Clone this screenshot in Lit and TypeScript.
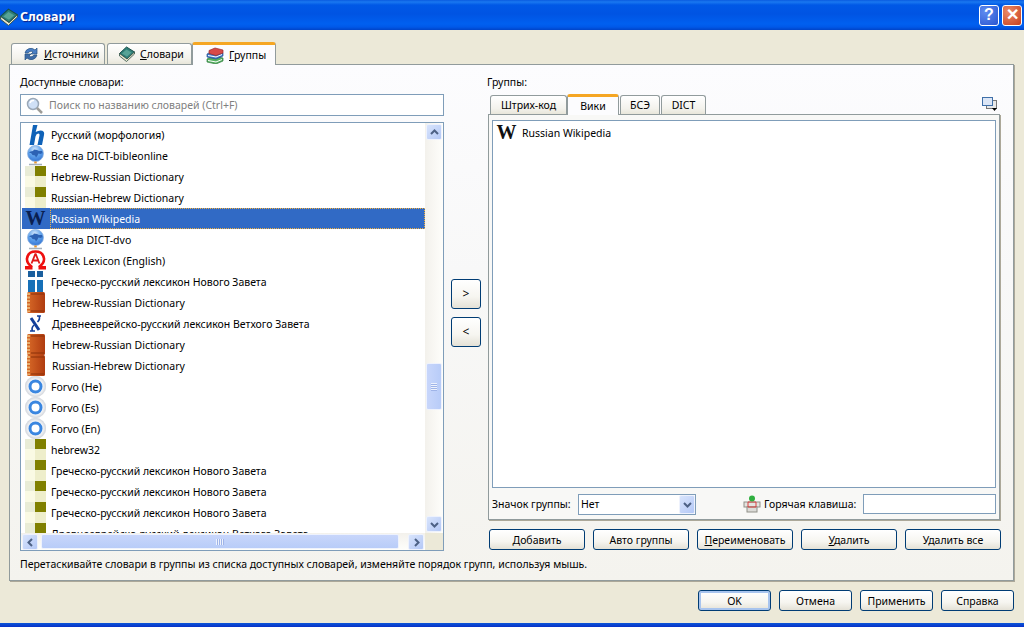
import { LitElement, html, css } from 'lit';
import { customElement } from 'lit/decorators.js';

const book = (size = 16) => html`<svg class="ic" width="${size}" height="${size}" viewBox="0 0 16 16">
  <path d="M.5 7.500 7.500 1 15.500 6 8 13Z" fill="#2f7f78" stroke="#174f4a"/>
  <path d="M3 7.500 7.500 3.500 12.500 6.500 8 10.500Z" fill="#57a396"/>
  <path d="M.5 7.500v2.500l7 5.500 8-7.500V6L8 13Z" fill="#e9e5cc" stroke="#2f4f46" stroke-width=".8"/>
</svg>`;

const refresh = html`<svg class="ic" width="16" height="16" viewBox="0 0 16 16">
  <path d="M2 7a6 6 0 0 1 10-3l2-2v6H8l2-2a3.500 3.500 0 0 0-5 1Z" fill="#4a7fc4" stroke="#25507f" stroke-width=".7"/>
  <path d="M14 9a6 6 0 0 1-10 3l-2 2V8h6L6 10a3.500 3.500 0 0 0 5-1Z" fill="#3e6ca8" stroke="#25507f" stroke-width=".7"/>
</svg>`;

const books = html`<svg class="ic" width="18" height="17" viewBox="0 0 18 17">
  <path d="M1 12 7 9l10 2v3l-7 3-9-2Z" fill="#55b060" stroke="#2e7a3c" stroke-width=".7"/>
  <path d="M2 13.500 10 15l6-2.500" fill="none" stroke="#fff"/>
  <path d="M1 7 7 4l10 2v3l-7 3-9-2Z" fill="#3f78c8" stroke="#24508f" stroke-width=".7"/>
  <path d="M2 8.500 10 10l6-2.500" fill="none" stroke="#fff"/>
  <path d="M3 3.500 9 1l8 2v3l-7 2.500-7-2Z" fill="#d84a48" stroke="#982a2a" stroke-width=".7"/>
</svg>`;

const magnifier = html`<svg class="ic" width="17" height="17" viewBox="0 0 17 17">
  <circle cx="7" cy="7" r="5.500" fill="#cfe0f6" stroke="#9aa8b8" stroke-width="1.500"/>
  <path d="M4 6a3.500 3.500 0 0 1 4-2.500" fill="none" stroke="#fff" stroke-width="1.500"/>
  <path d="m11 11 5 5" stroke="#9c9c98" stroke-width="2.500"/>
</svg>`;

const icons: Record<string, unknown> = {
  h: html`<span class="ic-box"><svg width="21" height="21" viewBox="0 0 21 21">
    <path d="M8 1h4.500l-1.800 7Q13 6.500 15.500 6.500 20 6.500 19 11l-2 10h-4.500l2-9.500q.4-2-1.200-2-2 0-2.800 3L9 21H4.500Z" fill="#0f62b8"/>
  </svg></span>`,
  globe: html`<span class="ic-box"><svg width="21" height="21" viewBox="0 0 21 21">
    <defs><radialGradient id="g" cx=".45" cy=".25" r=".8"><stop offset="0" stop-color="#d4e8fc"/><stop offset=".5" stop-color="#5fa2ec"/><stop offset="1" stop-color="#2f6fd0"/></radialGradient></defs>
    <circle cx="10.500" cy="8.500" r="8" fill="url(#g)" stroke="#8fb4e0" stroke-width=".8"/>
    <path d="M4 8q1-2 4-2l1-1.500 3 .5 2 1 3 0 .5 2-2 1-2-.5-1 2-1.500 2-1-2-2.500-.5-1.500-2Z" fill="#2c62b4"/>
    <path d="M10.500 16.500v2" stroke="#e8962c" stroke-width="2.500"/>
    <path d="M4 19.500h13" stroke="#a4b0bc" stroke-width="1.500"/>
  </svg></span>`,
  tile: html`<span class="ic-box"><svg width="21" height="21" viewBox="0 0 21 21" shape-rendering="crispEdges">
    <rect width="10" height="10" fill="#e9ecd6"/>
    <rect x="10" width="11" height="10" fill="#808000"/>
    <rect y="10" width="10" height="11" fill="#fafae4"/>
    <rect x="10" y="10" width="11" height="11" fill="#eeeecb"/>
  </svg></span>`,
  w: html`<span class="ic-box"><span class="ic-w">W</span></span>`,
  omega: html`<span class="ic-box"><svg width="21" height="21" viewBox="0 0 21 21">
    <path d="M7 17Q1.500 13 2 8.500 3 1.500 10.500 1.500T19 8.500Q19.500 13 14 17" fill="#fff" stroke="#ee1010" stroke-width="2.600"/>
    <path d="M0 16h7.500v3.500H0ZM13.500 16H21v3.500h-7.500Z" fill="#ee1010"/>
    <path d="m10.500 3.500-4 10M10.500 3.500l4 10M7.500 10.500h6" fill="none" stroke="#e01818" stroke-width="1.800"/>
  </svg></span>`,
  cross: html`<span class="ic-box"><svg width="21" height="21" viewBox="0 0 21 21" shape-rendering="crispEdges">
    <rect x="3" y="0" width="7" height="6" fill="#1a5f9e"/>
    <rect x="12" y="0" width="6" height="6" fill="#1a5f9e"/>
    <rect x="3" y="9" width="7" height="12" fill="#1670b8"/>
    <rect x="12" y="9" width="6" height="12" fill="#1670b8"/>
  </svg></span>`,
  redbook: html`<span class="ic-box"><svg width="21" height="21" viewBox="0 0 21 21">
    <defs><linearGradient id="rb" x1="0" x2="1" y1="0" y2="0"><stop offset="0" stop-color="#d86a28"/><stop offset="1" stop-color="#b03c10"/></linearGradient></defs>
    <rect x="2" y="0" width="18" height="21" rx="1.500" fill="url(#rb)"/>
    <path d="M3.500 1v19" stroke="#e8b070" stroke-width="3" stroke-dasharray="2 1.500"/>
    <path d="M6 2h13M6 19h13" stroke="#8a3008" stroke-width="1"/>
  </svg></span>`,
  aleph: html`<span class="ic-box"><svg width="21" height="21" viewBox="0 0 21 21">
    <path d="M6 5 14 17" stroke="#123f9a" stroke-width="3" fill="none"/>
    <path d="M14 3q1.500 3-1.500 6M7.500 18q-1.500-3 1.500-6M5 18h5M12 3h4" stroke="#123f9a" stroke-width="1.600" fill="none"/>
  </svg></span>`,
  ring: html`<span class="ic-box"><svg width="21" height="21" viewBox="0 0 21 21">
    <defs><radialGradient id="rg"><stop offset=".6" stop-color="#ffffff"/><stop offset="1" stop-color="#d4d8de"/></radialGradient></defs>
    <circle cx="10.500" cy="10.500" r="10.300" fill="url(#rg)" stroke="#d0d4da" stroke-width=".6"/>
    <circle cx="10.500" cy="10.500" r="5.500" fill="#fff" stroke="#3a86e0" stroke-width="3"/>
  </svg></span>`,
};

const items = [
  ['h', 'Русский (морфология)'],
  ['globe', 'Все на DICT-bibleonline'],
  ['tile', 'Hebrew-Russian Dictionary'],
  ['tile', 'Russian-Hebrew Dictionary'],
  ['w', 'Russian Wikipedia'],
  ['globe', 'Все на DICT-dvo'],
  ['omega', 'Greek Lexicon (English)'],
  ['cross', 'Греческо-русский лексикон Нового Завета'],
  ['redbook', 'Hebrew-Russian Dictionary'],
  ['aleph', 'Древнееврейско-русский лексикон Ветхого Завета'],
  ['redbook', 'Hebrew-Russian Dictionary'],
  ['redbook', 'Russian-Hebrew Dictionary'],
  ['ring', 'Forvo (He)'],
  ['ring', 'Forvo (Es)'],
  ['ring', 'Forvo (En)'],
  ['tile', 'hebrew32'],
  ['tile', 'Греческо-русский лексикон Нового Завета'],
  ['tile', 'Греческо-русский лексикон Нового Завета'],
  ['tile', 'Греческо-русский лексикон Нового Завета'],
  ['tile', 'Древнееврейско-русский лексикон Ветхого Завета'],
];

const arrow = (d: string) => html`<svg width="9" height="9" viewBox="0 0 9 9"><path d="${d}" fill="none" stroke="#4d6185" stroke-width="2"/></svg>`;

@customElement('app-root')
export class AppRoot extends LitElement {
  static styles = css`
    :host {
      display: flex;
      flex-direction: column;
      width: 1024px;
      height: 627px;
      overflow: hidden;
      background: #ece9d8;
      color: #000;
      font: 10.500px/14px "Noto Sans", sans-serif;
      white-space: nowrap;
    }
    u { text-decoration: underline; }
    .ic { display: block; flex: none; }

    .titlebar {
      display: flex;
      align-items: center;
      flex: none;
      height: 30px;
      padding: 3px 2px 0 0;
      box-sizing: border-box;
      background: linear-gradient(180deg, #0a5be0 0, #1a78f0 2px, #0058e6 5px, #0054e3 14px, #0060f0 24px, #0058e8 27px, #0044c8 30px);
    }
    .title-ic { margin: 0 2px 0 0; }
    .title {
      flex: 1;
      font: bold 12.500px/16px "Noto Sans", sans-serif;
      color: #fff;
      text-shadow: 1px 1px 1px #0f1f80;
    }
    .cap {
      display: flex;
      align-items: center;
      justify-content: center;
      width: 20px;
      height: 21px;
      margin-left: 3px;
      margin-top: -3px;
      border: 1px solid #fff;
      border-radius: 3px;
      box-sizing: border-box;
      color: #fff;
      font: bold 16px/1 "Liberation Sans", sans-serif;
    }
    .cap.help { background: radial-gradient(circle at 30% 30%, #5f8cf0, #2a55d0); }
    .cap.close { background: radial-gradient(circle at 30% 30%, #ec8a68, #c8401c); }

    .content {
      display: flex;
      flex-direction: column;
      flex: 1;
      padding: 11px 10px 0 9px;
    }
    .tabs { display: flex; align-items: flex-end; flex: none; }
    .main-tabs { height: 23px; padding-left: 2px; }
    .tab {
      display: flex;
      align-items: center;
      gap: 5px;
      box-sizing: border-box;
      height: 21px;
      padding-left: 11px;
      border: 1px solid #919b9c;
      border-bottom: none;
      border-radius: 3px 3px 0 0;
      background: linear-gradient(180deg, #fff, #f3f2ec 70%, #e8e6da);
    }
    .tab.on {
      height: 23px;
      margin-bottom: -1px;
      position: relative;
      background: #fcfcfe;
      border-top: 3px solid #f5a623;
    }
    .main-tabs .t1 { width: 94px; margin-right: 2px; }
    .main-tabs .t2 { width: 85px; }
    .main-tabs .t3 { width: 84px; padding-left: 13px; }

    .panel {
      display: flex;
      flex-direction: column;
      box-sizing: border-box;
      height: 517px;
      padding: 10px 10px 0;
      border: 1px solid #919b9c;
      background: linear-gradient(180deg, #fcfcfe 0, #f8f8f8 40%, #f4f3ee 100%);
      box-shadow: 1px 1px 0 #aca899;
    }
    .columns { display: flex; height: 476px; }
    .left { display: flex; flex-direction: column; width: 424px; }
    .label { height: 14px; margin-bottom: 5px; }
    .search {
      display: flex;
      align-items: center;
      gap: 6px;
      box-sizing: border-box;
      height: 22px;
      padding-left: 5px;
      margin-bottom: 6px;
      border: 1px solid #7f9db9;
      background: #fff;
      color: #808080;
    }

    .list {
      display: grid;
      grid-template-columns: 1fr 18px;
      grid-template-rows: 1fr 17px;
      box-sizing: border-box;
      height: 429px;
      border: 1px solid #7f9db9;
      background: #fff;
    }
    .rows { overflow: hidden; padding: 1px 0 0 1px; }
    .row {
      display: flex;
      align-items: center;
      height: 21px;
    }
    .ic-box {
      display: flex;
      align-items: center;
      justify-content: center;
      flex: none;
      width: 21px;
      height: 21px;
      margin: 0 5px 0 3px;
    }
    .row.sel { background: #316ac5; color: #fff; }
    .row .txt { flex: 1; height: 21px; padding-top: 1px; line-height: 20px; box-sizing: border-box; }
    .row.sel .txt {
      padding-top: 0;
      line-height: 20px;
      margin-left: -1px;
      border: 1px dotted #f0b040;
    }
    .row.shift .txt { padding-left: 1px; }
    .row.sel svg, .row.sel .ic-w { opacity: .7; }
    .ic-w {
      font: bold 20px/21px "Liberation Serif", serif;
      color: #111;
    }
    .row.sel .ic-w { color: #0a1f50; opacity: 1; }

    .vbar {
      display: flex;
      flex-direction: column;
      background: linear-gradient(90deg, #f3f1ec, #fefefb);
    }
    .hbar {
      display: flex;
      background: linear-gradient(180deg, #f3f1ec, #fefefb);
    }
    .corner { background: #ece9d8; }
    .sb-btn {
      display: flex;
      align-items: center;
      justify-content: center;
      flex: none;
      box-sizing: border-box;
      width: 16px;
      height: 16px;
      margin: 1px;
      border: 1px solid #eef2fd;
      border-radius: 2px;
      background: linear-gradient(135deg, #d8e4fc, #b4c8f6);
    }
    .thumb {
      display: flex;
      align-items: center;
      justify-content: center;
      box-sizing: border-box;
      border: 1px solid #eef2fd;
      border-radius: 2px;
      background: linear-gradient(90deg, #c8d6fb, #b8ccf8);
    }
    .vbar .thumb { width: 16px; height: 47px; margin: 222px 1px 0; }
    .vbar .spacer, .hbar .spacer { flex: 1; }
    .hbar .thumb { width: 358px; height: 15px; margin: 1px 0 0 2px; background: linear-gradient(180deg, #c8d6fb, #b8ccf8); }
    .grip-v { width: 6px; height: 8px; background: repeating-linear-gradient(180deg, #eef2fd 0 1px, #9fb4e8 1px 2px); }
    .grip-h { width: 8px; height: 6px; background: repeating-linear-gradient(90deg, #eef2fd 0 1px, #9fb4e8 1px 2px); }

    .middle {
      display: flex;
      flex-direction: column;
      justify-content: center;
      gap: 8px;
      width: 30px;
      margin: 0 6px 0 7px;
    }
    .btn {
      display: flex;
      align-items: center;
      justify-content: center;
      flex: none;
      box-sizing: border-box;
      height: 21px;
      border: 1px solid #003c74;
      border-radius: 3px;
      background: linear-gradient(180deg, #fff 0, #f6f5f0 60%, #e4e1d6 100%);
    }
    .middle .btn { height: 30px; font-size: 12px; }
    .btn.def { box-shadow: inset 0 0 0 2px #a8c4ee; }

    .right { display: flex; flex-direction: column; flex: 1; }
    .sub-tabs { height: 20px; padding-left: 3px; }
    .sub-tabs .tab { height: 19px; padding: 0; justify-content: center; }
    .sub-tabs .tab.on { height: 21px; }
    .sub-tabs .a { width: 77px; }
    .sub-tabs .b { width: 52px; margin-right: 1px; }
    .sub-tabs .c { width: 40px; margin-right: 1px; }
    .sub-tabs .d { width: 45px; }
    .sub-tabs .corner-ic { margin-left: auto; margin-right: 5px; margin-bottom: 3px; }
    .pane {
      display: flex;
      flex-direction: column;
      box-sizing: border-box;
      width: 512px;
      margin-left: 1px;
      height: 406px;
      padding: 5px 3px 0;
      border: 1px solid #919b9c;
      box-shadow: 1px 1px 0 #aca899;
      background: #f8f8f6;
    }
    .group-list {
      box-sizing: border-box;
      height: 368px;
      padding: 1px 0 0 3px;
      border: 1px solid #7f9db9;
      background: #fff;
    }
    .group-row .ic-box { margin: 0 5px 0 0; }
    .options { display: flex; align-items: center; height: 22px; margin-top: 5px; }
    .opt-label { width: 81px; margin-right: 5px; }
    .combo {
      display: flex;
      align-items: center;
      box-sizing: border-box;
      width: 118px;
      height: 21px;
      padding-left: 2px;
      border: 1px solid #7f9db9;
      background: #fff;
    }
    .combo span { flex: 1; }
    .combo .sb-btn { margin: 0; height: 19px; }
    .hot { margin-left: 47px; }
    .hot-label { width: 93px; margin: 0 6px 0 3px; }
    .hot-input {
      box-sizing: border-box;
      width: 133px;
      height: 20px;
      border: 1px solid #7f9db9;
      background: #fff;
    }
    .group-btns { display: flex; gap: 8px; margin: 9px 0 0 2px; }
    .group-btns .btn { width: 96px; }

    .hint { margin-top: 6px; height: 14px; }
    .footer {
      display: flex;
      justify-content: flex-end;
      gap: 8px;
      margin: 9px 0 0;
    }
    .footer .btn { width: 73px; }
    .footer-space { flex: 1; }
    .edge { flex: none; height: 4px; background: linear-gradient(180deg, #0a55d8, #0831c8); }
  `;

  renderRow(icon: string, text: string, sel = false) {
    const shift = icon === 'redbook' || icon === 'aleph';
    return html`<div class="row ${sel ? 'sel' : ''} ${shift ? 'shift' : ''}">${icons[icon]}<span class="txt">${text}</span></div>`;
  }

  render() {
    return html`
      <div class="titlebar">
        <span class="title-ic">${book(18)}</span>
        <span class="title">Словари</span>
        <span class="cap help">?</span>
        <span class="cap close">✕</span>
      </div>
      <div class="content">
        <div class="tabs main-tabs">
          <div class="tab t1">${refresh}<span><u>И</u>сточники</span></div>
          <div class="tab t2">${book()}<span><u>С</u>ловари</span></div>
          <div class="tab t3 on">${books}<span><u>Г</u>руппы</span></div>
        </div>
        <div class="panel">
          <div class="columns">
            <div class="left">
              <div class="label">Доступные словари:</div>
              <div class="search">${magnifier}<span>Поиск по названию словарей (Ctrl+F)</span></div>
              <div class="list">
                <div class="rows">
                  ${items.map(([icon, text]) => this.renderRow(icon, text, text === 'Russian Wikipedia'))}
                </div>
                <div class="vbar">
                  <div class="sb-btn">${arrow('M1 6 4.500 2.500 8 6')}</div>
                  <div class="thumb"><span class="grip-v"></span></div>
                  <div class="spacer"></div>
                  <div class="sb-btn">${arrow('M1 3 4.500 6.500 8 3')}</div>
                </div>
                <div class="hbar">
                  <div class="sb-btn">${arrow('M6 1 2.500 4.500 6 8')}</div>
                  <div class="thumb"><span class="grip-h"></span></div>
                  <div class="spacer"></div>
                  <div class="sb-btn">${arrow('M3 1 6.500 4.500 3 8')}</div>
                </div>
                <div class="corner"></div>
              </div>
            </div>
            <div class="middle">
              <div class="btn">&gt;</div>
              <div class="btn">&lt;</div>
            </div>
            <div class="right">
              <div class="label">Группы:</div>
              <div class="tabs sub-tabs">
                <div class="tab a">Штрих-код</div>
                <div class="tab b on">Вики</div>
                <div class="tab c">БСЭ</div>
                <div class="tab d">DICT</div>
                <svg class="corner-ic" width="16" height="14" viewBox="0 0 16 14">
                  <rect x="4.500" y="3.500" width="10" height="8" fill="#e8e8e8" stroke="#777"/>
                  <rect x=".5" y=".5" width="10" height="8" fill="#dce6f6" stroke="#3f6fa8"/>
                  <path d="M10 11h5l-2.500 3Z" fill="#000"/>
                </svg>
              </div>
              <div class="pane">
                <div class="group-list">
                  <div class="group-row">${this.renderRow('w', 'Russian Wikipedia')}</div>
                </div>
                <div class="options">
                  <span class="opt-label">Значок группы:</span>
                  <div class="combo"><span>Нет</span><div class="sb-btn">${arrow('M1 3 4.500 6.500 8 3')}</div></div>
                  <svg class="hot" width="18" height="18" viewBox="0 0 18 18">
                    <rect x="1" y="7" width="16" height="5" fill="#e4e4e0" stroke="#909088"/>
                    <rect x="4" y="12" width="10" height="5" fill="#dcdcd8" stroke="#909088"/>
                    <path d="M5 7h8v5H5Z" fill="none" stroke="#d84040"/>
                    <circle cx="9" cy="3.500" r="3" fill="#30b040"/>
                  </svg>
                  <span class="hot-label">Горячая клавиша:</span>
                  <div class="hot-input"></div>
                </div>
              </div>
              <div class="group-btns">
                <div class="btn"><span><u>Д</u>обавить</span></div>
                <div class="btn">Авто группы</div>
                <div class="btn"><span><u>П</u>ереименовать</span></div>
                <div class="btn"><span><u>У</u>далить</span></div>
                <div class="btn">Удалить все</div>
              </div>
            </div>
          </div>
          <div class="hint">Перетаскивайте словари в группы из списка доступных словарей, изменяйте порядок групп, используя мышь.</div>
        </div>
        <div class="footer">
          <div class="btn def">OK</div>
          <div class="btn">Отмена</div>
          <div class="btn">Применить</div>
          <div class="btn">Справка</div>
        </div>
        <div class="footer-space"></div>
      </div>
      <div class="edge"></div>
    `;
  }
}
